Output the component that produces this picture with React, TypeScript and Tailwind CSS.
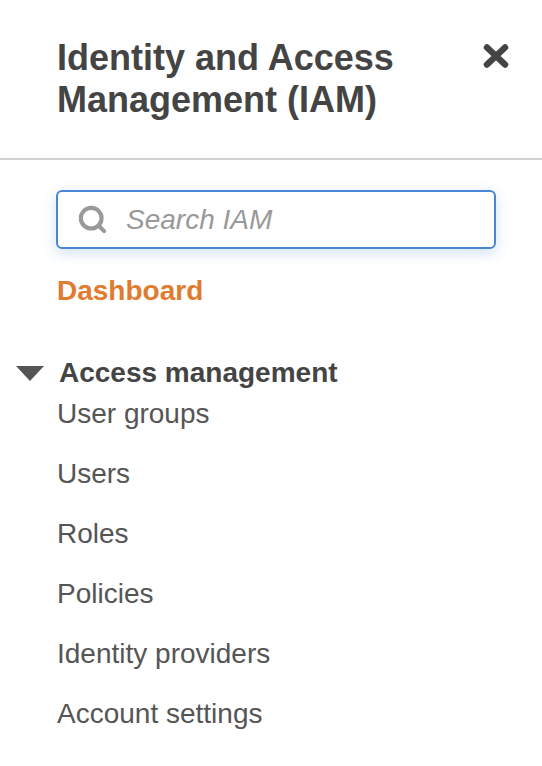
import { Search } from 'lucide-react';

const items = ['User groups', 'Users', 'Roles', 'Policies', 'Identity providers', 'Account settings'];

export default function App() {
  return (
    <div className="h-[766px] w-[542px] overflow-hidden bg-white font-['Liberation_Sans',Arial,sans-serif] text-[#444]">
      {/* Header */}
      <div className="flex items-start justify-between pl-[57px] pr-[33px] pt-[37px] pb-[37px]">
        <h1 className="text-[36px] font-bold leading-[42px] text-[#444]">
          Identity and Access
          <br />
          Management (IAM)
        </h1>
        <svg width="26" height="24" viewBox="0 0 26 24" className="mt-[7px]">
          <path d="M4 3.5 L22 20.5 M22 3.5 L4 20.5" stroke="#444" strokeWidth="6.5" strokeLinecap="round" />
        </svg>
      </div>
      <div className="h-[2px] w-full bg-[#cfcfcf]" />

      {/* Search */}
      <div className="pl-[56px] pr-[46px] pt-[30px]">
        <div className="flex h-[59px] items-center rounded-[6px] border-2 border-[#4a86d8] bg-white pl-[19px] shadow-[0_4px_14px_rgba(74,134,216,0.25)]">
          <Search size={31} strokeWidth={3.2} className="text-[#999]" />
          <span className="ml-[18px] text-[28px] italic text-[#999]">Search IAM</span>
        </div>
      </div>

      {/* Dashboard */}
      <div className="pl-[57px] pt-[26px] text-[28px] font-bold leading-[32px] text-[#e07b30]">Dashboard</div>

      {/* Access management */}
      <div className="mt-[50px] flex items-center pl-[16px]">
        <svg width="28" height="15" viewBox="0 0 28 15">
          <path d="M0 0 L28 0 L14 15 Z" fill="#555" />
        </svg>
        <span className="ml-[15px] text-[28px] font-bold leading-[32px] text-[#444]">Access management</span>
      </div>
      <ul className="pl-[57px]">
        {items.map((item, i) => (
          <li key={item} className={`text-[28px] leading-[32px] text-[#555] ${i === 0 ? 'mt-[9px]' : 'mt-[28px]'}`}>
            {item}
          </li>
        ))}
      </ul>
    </div>
  );
}
